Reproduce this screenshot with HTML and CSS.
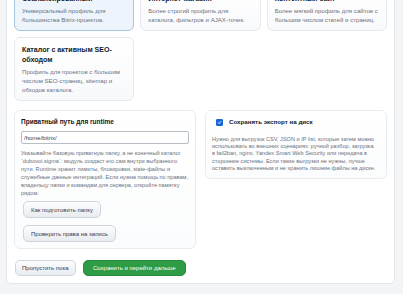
FILE: index.html
```html
<!DOCTYPE html>
<html lang="ru">
<head>
  <meta charset="UTF-8" />
  <meta name="viewport" content="width=device-width, initial-scale=1.0"/>
  <title>Мастер настройки</title>
  <link rel="stylesheet" href="styles.css">
</head>
<body>
  <div class="wizard">
    <div class="profiles">
      <div class="profile active">
        <div class="profile-title">Сбалансированный</div>
        <div class="profile-desc">Универсальный профиль для большинства Bitrix-проектов.</div>
      </div>
      <div class="profile">
        <div class="profile-title">Интернет-магазин</div>
        <div class="profile-desc">Более строгий профиль для каталога, фильтров и AJAX-точек.</div>
      </div>
      <div class="profile">
        <div class="profile-title">Контентный сайт</div>
        <div class="profile-desc">Более мягкий профиль для сайтов с большим числом статей и страниц.</div>
      </div>
      <div class="profile">
        <div class="profile-title">Каталог с активным SEO-обходом</div>
        <div class="profile-desc">Профиль для проектов с большим числом SEO-страниц, sitemap и обходов каталога.</div>
      </div>
    </div>

    <div class="settings">
      <div class="box">
        <label class="box-title" for="runtime">Приватный путь для runtime</label>
        <input type="text" id="runtime" class="path" value="/home/bitrix/" />
        <p class="hint">Указывайте базовую приватную папку, а не конечный каталог `dubovoi.sigma`: модуль создаст его сам внутри выбранного пути. Runtime хранит лимиты, блокировки, state-файлы и служебные данные интеграций. Если нужна помощь по правам, владельцу папки и командам для сервера, откройте памятку рядом.</p>
        <div class="box-actions">
          <button class="btn">Как подготовить папку</button>
          <button class="btn">Проверить права на запись</button>
        </div>
      </div>
      <div class="box box-export">
        <label class="check"><input type="checkbox" checked /> Сохранять экспорт на диск</label>
        <p class="hint">Нужно для выгрузок CSV, JSON и IP list, которые затем можно использовать во внешних сценариях: ручной разбор, загрузка в&nbsp;fail2ban, nginx, Yandex Smart Web Security или передача в сторонние системы. Если такие выгрузки не нужны, лучше оставить выключенным и не хранить лишние файлы на диске.</p>
      </div>
    </div>

    <div class="actions">
      <button class="btn">Пропустить пока</button>
      <button class="btn btn-primary">Сохранить и перейти дальше</button>
    </div>
  </div>
</body>
</html>
```

FILE: styles.css
```css
body { margin:0; background:#f3f4f6; font-family:"Liberation Sans", Arial, sans-serif; color:#1f2937;}
.wizard { margin:-23px 8px 0 6px; background:#fff; border:1px solid #e3e6ea; border-radius:5px; padding:8px 7px 7px 7px;}

.profiles { display:grid; grid-template-columns:repeat(3, 1fr); gap:6px;}
.profile { background:linear-gradient(#fff, #f8f9fb); border:1px solid #e6e9ee; border-radius:6px; padding:7px 8px 6px 7px;}
.profile.active { background:#eef4fb; border-color:#a8c4e0;}
.profile-title { font-size:7.1px; font-weight:bold; line-height:10px; color:#111827; margin-bottom:2px;}
.profile-desc { font-size:6.1px; line-height:9px; color:#6b7280;}

.settings { display:grid; grid-template-columns:1fr 1fr; gap:9px; align-items:start; margin-top:9px;}
.box { background:linear-gradient(#fff, #fbfcfd); border:1px solid #e8ebef; border-radius:6px; padding:6px 6px 6px 6px;}
.box-export { padding-bottom:6px;}
.box-title { display:block; font-size:6.5px; font-weight:bold; line-height:10px; color:#111827;}
.path { display:block; width:100%; box-sizing:border-box; height:13px; margin:4px 0 6px; padding:0 2px; border:1px solid #b8bec6; border-radius:2px; font:6px "Liberation Sans", Arial, sans-serif; color:#374151;}
.hint { margin:0; font-size:5.6px; line-height:7.9px; color:#6b7280;}
.box-actions { display:flex; flex-direction:column; align-items:flex-start; gap:7px; margin-top:4px; padding-left:2px;}

.check { display:flex; align-items:center; gap:4px; padding-left:4px; font-size:6.2px; font-weight:bold; line-height:10px; color:#111827;}
.check input { appearance:none; -webkit-appearance:none; width:7px; height:7px; margin:0 2px 0 0; border-radius:1px; background:#fff; border:1px solid #9aa4b0;}
.check input:checked { border-color:#1a66d6; background:#1a66d6 url("data:image/svg+xml,%3Csvg xmlns='http://www.w3.org/2000/svg' viewBox='0 0 10 10'%3E%3Cpath d='M2 5.2l2 2 4-4.4' fill='none' stroke='white' stroke-width='1.8'/%3E%3C/svg%3E") center/100% no-repeat;}
.box .check + .hint { margin-top:9px; line-height:7.2px;}

.btn { font:6px "Liberation Sans", Arial, sans-serif; color:#374151; background:linear-gradient(#fdfdfe, #e8ecf0); border:1px solid #cfd5dc; border-radius:5px; height:17px; padding:0 7px; cursor:pointer;}
.actions { display:flex; gap:7px; margin-top:11px; padding-left:1px;}
.actions .btn { height:16px; padding:0 6px;}
.actions .btn-primary { background:#2e9b45; border-color:#2a8c3f; color:#fff; padding:0 9.5px;}
```
